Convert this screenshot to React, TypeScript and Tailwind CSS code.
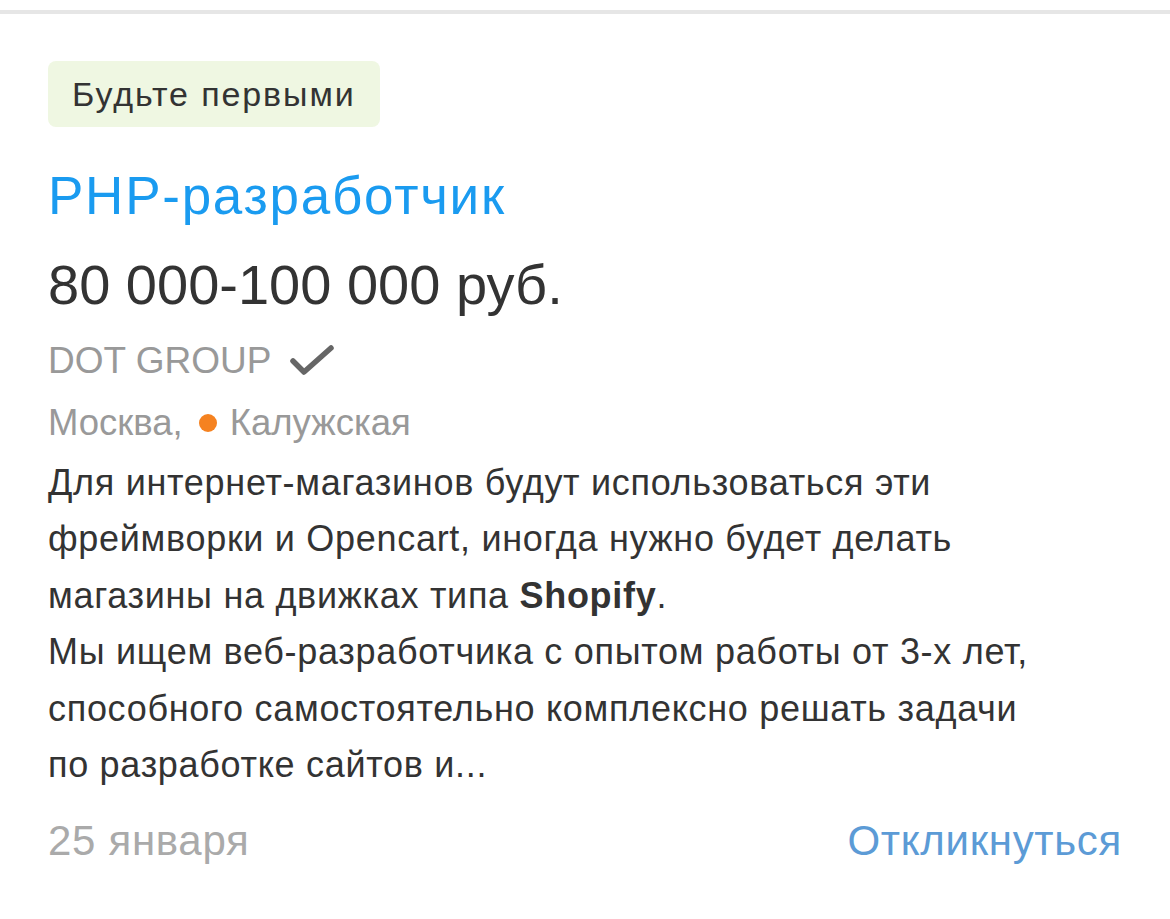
export default function App() {
  return (
    <div className="min-h-[919px] w-[1170px] bg-white font-['Liberation_Sans',Arial,sans-serif]">
      <div className="h-[14px] border-b-[4px] border-[#e6e6e6]" />
      <div className="px-[48px] pt-[47px]">
        <div className="inline-flex h-[66px] items-center rounded-[8px] bg-[#eff7e2] px-[24px] text-[34px] tracking-[1.9px] text-[#333333]">
          Будьте первыми
        </div>
        <h1 className="mt-[39px] text-[53px] leading-[60px] tracking-[1.75px] text-[#1a9bf0]">PHP-разработчик</h1>
        <div className="mt-[27px] text-[56px] leading-[64px] text-[#333333]">80 000-100 000 руб.</div>
        <div className="mt-[19px] flex items-center gap-[18px] text-[37px] leading-[50px] text-[#999999]">
          <span>DOT GROUP</span>
          <svg width="46" height="34" viewBox="0 0 46 34" fill="none">
            <path d="M4 17 L15 28 L42 4" stroke="#666666" strokeWidth="5.5" strokeLinecap="round" strokeLinejoin="round" />
          </svg>
        </div>
        <div className="mt-[12px] flex items-center text-[36.5px] leading-[50px] text-[#999999]">
          <span>Москва,</span>
          <span className="ml-[16px] mr-[13px] h-[18px] w-[18px] rounded-full bg-[#f58220]" />
          <span>Калужская</span>
        </div>
        <p className="mt-[7px] text-[36px] leading-[56.4px] tracking-[0.7px] text-[#333333]">
          Для интернет-магазинов будут использоваться эти
          <br />
          фреймворки и Opencart, иногда нужно будет делать
          <br />
          магазины на движках типа <b className="font-bold">Shopify</b>.
          <br />
          Мы ищем веб-разработчика с опытом работы от 3-х лет,
          <br />
          способного самостоятельно комплексно решать задачи
          <br />
          по разработке сайтов и...
        </p>
        <div className="mt-[20px] flex items-center justify-between text-[42px] leading-[56px] tracking-[0.7px]">
          <span className="text-[#aaaaaa]">25 января</span>
          <span className="text-[#5c9bd6]">Откликнуться</span>
        </div>
      </div>
    </div>
  )
}
